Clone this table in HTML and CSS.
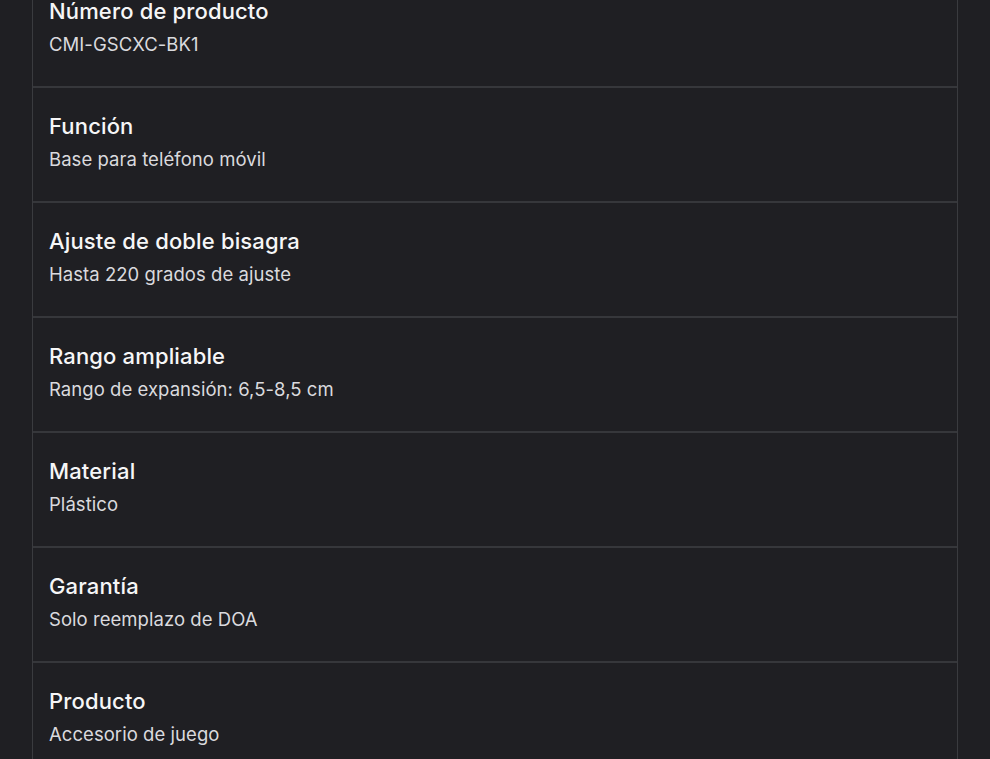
FILE: index.html
```html
<!DOCTYPE html>
<html lang="es">
<head>
<meta charset="utf-8">
<link rel="stylesheet" href="styles.css">
</head>
<body>
<div class="specs">
  <div class="row"><div class="label">Número de producto</div><div class="value">CMI-GSCXC-BK1</div></div>
  <div class="row"><div class="label">Función</div><div class="value">Base para teléfono móvil</div></div>
  <div class="row"><div class="label">Ajuste de doble bisagra</div><div class="value">Hasta 220 grados de ajuste</div></div>
  <div class="row"><div class="label">Rango ampliable</div><div class="value">Rango de expansión: 6,5-8,5 cm</div></div>
  <div class="row"><div class="label">Material</div><div class="value">Plástico</div></div>
  <div class="row"><div class="label">Garantía</div><div class="value">Solo reemplazo de DOA</div></div>
  <div class="row"><div class="label">Producto</div><div class="value">Accesorio de juego</div></div>
</div>
</body>
</html>
```
FILE: styles.css
```css
html, body {
  margin: 0;
  padding: 0;
  background: #1f1f23;
  overflow: hidden;
}
body {
  padding: 0 32px;
  font-family: Inter, "Noto Sans", sans-serif;
}
.specs {
  margin-top: -27px;
  border-left: 1px solid #3a3b3f;
  border-right: 1px solid #3a3b3f;
}
.row {
  box-sizing: border-box;
  height: 115px;
  padding: 24px 16px 0;
  border-bottom: 2px solid #36373b;
}
.label {
  font-size: 22px;
  font-weight: 500;
  line-height: 28px;
  color: #f6f6f7;
  margin-bottom: 7px;
  letter-spacing: 0.15px;
}
.value {
  font-size: 18.5px;
  line-height: 24px;
  color: #dadade;
  letter-spacing: 0.05px;
}
```
